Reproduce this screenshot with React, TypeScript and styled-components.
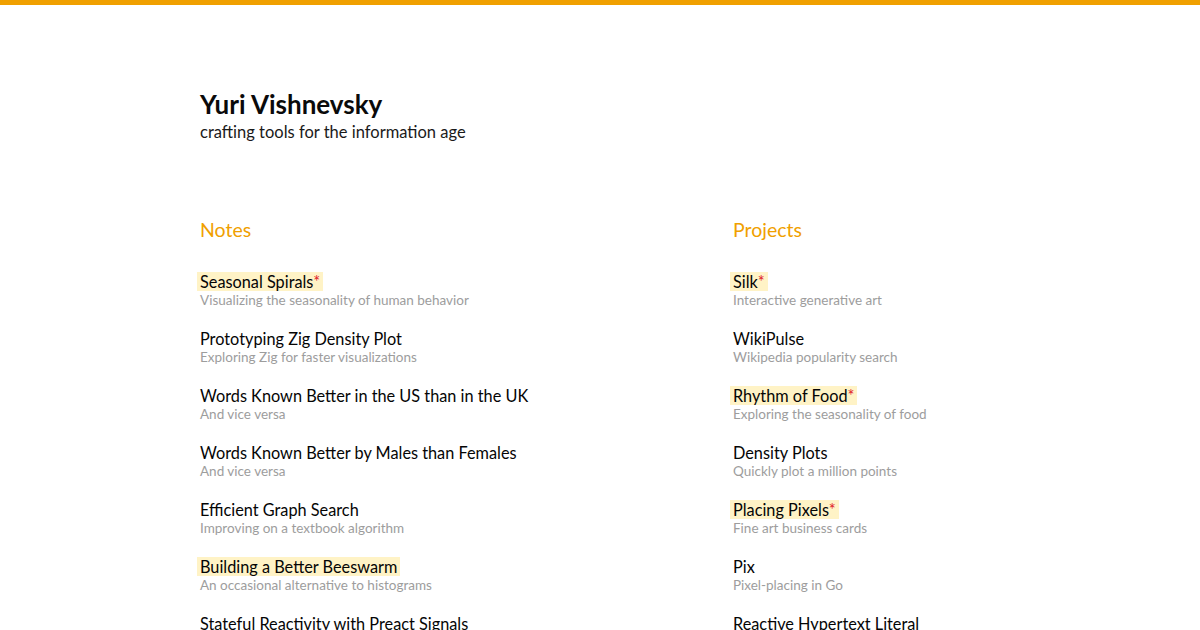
import React from "react";
import styled, { createGlobalStyle } from "styled-components";

const Global = createGlobalStyle`
  html, body { margin: 0; padding: 0; background: #fff; }
  body { font-family: Lato, "Noto Sans", sans-serif; color: #111; }
`;

const TopBar = styled.div`
  height: 5px;
  background: #f0a000;
`;

const Page = styled.main`
  padding: 83px 200px 0 200px;
`;

const Header = styled.header`
  display: flex;
  flex-direction: column;
  gap: 2px;
`;

const Name = styled.h1`
  margin: 0;
  font-size: 26px;
  line-height: 32px;
  font-weight: 700;
  color: #0a0a0a;
`;

const Tagline = styled.p`
  margin: 0;
  font-size: 16.5px;
  line-height: 20px;
  color: #1a1a1a;
`;

const Columns = styled.div`
  display: grid;
  grid-template-columns: 533px 1fr;
  margin-top: 75px;
`;

const Column = styled.section`
  display: flex;
  flex-direction: column;
`;

const SectionTitle = styled.h2`
  margin: 0 0 29px 0;
  font-size: 19.5px;
  line-height: 26px;
  font-weight: 400;
  color: #f0a000;
`;

const List = styled.ul`
  list-style: none;
  margin: 0;
  padding: 0;
  display: flex;
  flex-direction: column;
  gap: 20px;
`;

const Item = styled.li`
  display: flex;
  flex-direction: column;
  align-items: flex-start;
`;

const ItemTitle = styled.span<{ $hl?: boolean }>`
  font-size: 16.3px;
  line-height: 19px;
  color: #050505;
  margin-left: -3px;
  padding: 0 3px;
  background: ${(p) => (p.$hl ? "#fff3c6" : "transparent")};
`;

const Star = styled.span`
  color: #e0202a;
`;

const ItemSub = styled.span`
  font-size: 13.5px;
  line-height: 18px;
  color: #9d9d9d;
`;

type Entry = { t: string; s: string; hl?: boolean; star?: boolean };

const notes: Entry[] = [
  { t: "Seasonal Spirals", s: "Visualizing the seasonality of human behavior", hl: true, star: true },
  { t: "Prototyping Zig Density Plot", s: "Exploring Zig for faster visualizations" },
  { t: "Words Known Better in the US than in the UK", s: "And vice versa" },
  { t: "Words Known Better by Males than Females", s: "And vice versa" },
  { t: "Efficient Graph Search", s: "Improving on a textbook algorithm" },
  { t: "Building a Better Beeswarm", s: "An occasional alternative to histograms", hl: true },
  { t: "Stateful Reactivity with Preact Signals", s: "Using signals outside of components" },
];

const projects: Entry[] = [
  { t: "Silk", s: "Interactive generative art", hl: true, star: true },
  { t: "WikiPulse", s: "Wikipedia popularity search" },
  { t: "Rhythm of Food", s: "Exploring the seasonality of food", hl: true, star: true },
  { t: "Density Plots", s: "Quickly plot a million points" },
  { t: "Placing Pixels", s: "Fine art business cards", hl: true, star: true },
  { t: "Pix", s: "Pixel-placing in Go" },
  { t: "Reactive Hypertext Literal", s: "Reactive templates for the DOM" },
];

const Section = ({ title, items }: { title: string; items: Entry[] }) => (
  <Column>
    <SectionTitle>{title}</SectionTitle>
    <List>
      {items.map((e) => (
        <Item key={e.t}>
          <ItemTitle $hl={e.hl}>
            {e.t}
            {e.star && <Star>*</Star>}
          </ItemTitle>
          <ItemSub>{e.s}</ItemSub>
        </Item>
      ))}
    </List>
  </Column>
);

export default function App() {
  return (
    <>
      <Global />
      <TopBar />
      <Page>
        <Header>
          <Name>Yuri Vishnevsky</Name>
          <Tagline>crafting tools for the information age</Tagline>
        </Header>
        <Columns>
          <Section title="Notes" items={notes} />
          <Section title="Projects" items={projects} />
        </Columns>
      </Page>
    </>
  );
}
